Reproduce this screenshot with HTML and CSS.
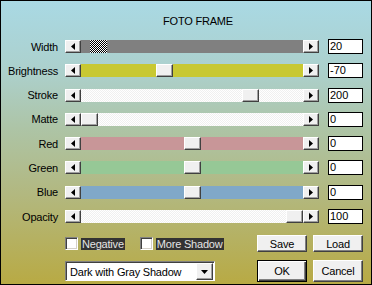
FILE: index.html
```html
<!DOCTYPE html>
<html lang="en">
<head>
<meta charset="UTF-8" />
<title>Foto Frame</title>
<link rel="stylesheet" href="styles.css">
</head>
<body>
  <div class="dialog">
    <div class="title">FOTO FRAME</div>

    <div class="rows">
      <div class="row">
        <span class="label">Width</span>
        <div class="scroll">
          <span class="arrow"><svg width="4" height="7"><polygon points="4,0 0,3.5 4,7" /></svg></span>
          <div class="track track-gray"><span class="thumb thumb-focus" style="left:9px"></span></div>
          <span class="arrow"><svg width="4" height="7"><polygon points="0,0 4,3.5 0,7" /></svg></span>
        </div>
        <span class="value">20</span>
      </div>

      <div class="row">
        <span class="label">Brightness</span>
        <div class="scroll">
          <span class="arrow"><svg width="4" height="7"><polygon points="4,0 0,3.5 4,7" /></svg></span>
          <div class="track track-yellow"><span class="thumb" style="left:75px"></span></div>
          <span class="arrow"><svg width="4" height="7"><polygon points="0,0 4,3.5 0,7" /></svg></span>
        </div>
        <span class="value">-70</span>
      </div>

      <div class="row">
        <span class="label">Stroke</span>
        <div class="scroll">
          <span class="arrow"><svg width="4" height="7"><polygon points="4,0 0,3.5 4,7" /></svg></span>
          <div class="track track-dither"><span class="thumb" style="left:161px"></span></div>
          <span class="arrow"><svg width="4" height="7"><polygon points="0,0 4,3.5 0,7" /></svg></span>
        </div>
        <span class="value">200</span>
      </div>

      <div class="row">
        <span class="label">Matte</span>
        <div class="scroll">
          <span class="arrow"><svg width="4" height="7"><polygon points="4,0 0,3.5 4,7" /></svg></span>
          <div class="track track-dither"><span class="thumb" style="left:0px"></span></div>
          <span class="arrow"><svg width="4" height="7"><polygon points="0,0 4,3.5 0,7" /></svg></span>
        </div>
        <span class="value">0</span>
      </div>

      <div class="row">
        <span class="label">Red</span>
        <div class="scroll">
          <span class="arrow"><svg width="4" height="7"><polygon points="4,0 0,3.5 4,7" /></svg></span>
          <div class="track track-red"><span class="thumb" style="left:103px"></span></div>
          <span class="arrow"><svg width="4" height="7"><polygon points="0,0 4,3.5 0,7" /></svg></span>
        </div>
        <span class="value">0</span>
      </div>

      <div class="row">
        <span class="label">Green</span>
        <div class="scroll">
          <span class="arrow"><svg width="4" height="7"><polygon points="4,0 0,3.5 4,7" /></svg></span>
          <div class="track track-green"><span class="thumb" style="left:103px"></span></div>
          <span class="arrow"><svg width="4" height="7"><polygon points="0,0 4,3.5 0,7" /></svg></span>
        </div>
        <span class="value">0</span>
      </div>

      <div class="row">
        <span class="label">Blue</span>
        <div class="scroll">
          <span class="arrow"><svg width="4" height="7"><polygon points="4,0 0,3.5 4,7" /></svg></span>
          <div class="track track-blue"><span class="thumb" style="left:103px"></span></div>
          <span class="arrow"><svg width="4" height="7"><polygon points="0,0 4,3.5 0,7" /></svg></span>
        </div>
        <span class="value">0</span>
      </div>

      <div class="row">
        <span class="label">Opacity</span>
        <div class="scroll">
          <span class="arrow"><svg width="4" height="7"><polygon points="4,0 0,3.5 4,7" /></svg></span>
          <div class="track track-dither"><span class="thumb" style="left:205px"></span></div>
          <span class="arrow"><svg width="4" height="7"><polygon points="0,0 4,3.5 0,7" /></svg></span>
        </div>
        <span class="value">100</span>
      </div>
    </div>

    <div class="bottom">
      <div class="checks">
        <span class="box"></span>
        <span class="check-text">Negative</span>
        <span class="box box-second"></span>
        <span class="check-text">More Shadow</span>
      </div>
      <button class="btn">Save</button>
      <button class="btn">Load</button>

      <div class="select">
        <span class="select-text">Dark with Gray Shadow</span>
        <span class="select-btn"><svg width="7" height="4"><polygon points="0,0 7,0 3.5,4" /></svg></span>
      </div>
      <button class="btn btn-big btn-default">OK</button>
      <button class="btn btn-big">Cancel</button>
    </div>
  </div>
</body>
</html>
```

FILE: styles.css
```css
body {
  margin: 0;
  font-family: "Liberation Sans", Arial, sans-serif;
  font-size: 11px;
  color: #000;
}

.dialog {
  width: 372px;
  height: 285px;
  box-sizing: border-box;
  border: 1px solid #000;
  padding-top: 14px;
  background: linear-gradient(180deg, #a9d9e4 0%, #acd0cc 25%, #adc4a6 45%, #b2b880 68%, #b8aa44 100%);
}

.title {
  padding-left: 162px;
  line-height: 13px;
  letter-spacing: -0.2px;
}

/* Slider rows */
.rows {
  display: flex;
  flex-direction: column;
  gap: 9.3px;
  margin-top: 11px;
}

.row {
  display: flex;
  align-items: center;
  height: 15px;
}

.label {
  width: 57px;
  text-align: right;
  letter-spacing: -0.2px;
}

.scroll {
  display: flex;
  width: 254px;
  height: 13px;
  margin-left: 7px;
}

.arrow,
.thumb,
.select-btn {
  box-sizing: border-box;
  background: #f0f0f0;
  border: 1px solid;
  border-color: #fff #404040 #404040 #fff;
  box-shadow: inset -1px -1px #a0a0a0;
}

.arrow {
  width: 16px;
  display: flex;
  align-items: center;
  justify-content: center;
}

.track {
  flex: 1;
  position: relative;
}

.thumb {
  position: absolute;
  top: 0;
  width: 17px;
  height: 13px;
}

.thumb-focus {
  border: none;
  box-shadow: none;
  background: repeating-conic-gradient(#000 0 25%, #fff 0 50%) 0 0 / 2px 2px;
}

.track-gray { background: #808080; }
.track-yellow { background: #c8c832; }
.track-red { background: #c89698; }
.track-green { background: #96c896; }
.track-blue { background: #80a8c8; }
.track-dither {
  background: repeating-conic-gradient(#fff 0 25%, #f0f0f0 0 50%) 0 0 / 2px 2px;
}

.value {
  width: 35px;
  height: 15px;
  margin-left: 9px;
  box-sizing: border-box;
  border: 1px solid #000;
  background: #fff;
  padding-left: 1px;
  line-height: 13px;
}

/* Bottom controls */
.bottom {
  display: grid;
  grid-template-columns: 186px 50px 50px;
  grid-template-rows: 17px 22px;
  column-gap: 6px;
  row-gap: 8px;
  margin-top: 11px;
  padding-left: 64px;
}

.checks {
  display: flex;
  align-items: center;
}

.box {
  width: 13px;
  height: 13px;
  box-sizing: border-box;
  background: #fff;
  border: 1px solid;
  border-color: #808080 #fff #fff #808080;
  box-shadow: inset 1px 1px #404040, inset -1px -1px #d4d0c8;
  margin-right: 3px;
}

.box-second {
  margin-left: 15px;
}

.check-text {
  background: #333;
  color: #e4e4e4;
  height: 12px;
  line-height: 12px;
  padding: 0 1px;
  letter-spacing: -0.2px;
}

.btn {
  font: inherit;
  letter-spacing: -0.2px;
  color: #000;
  padding: 0;
  background: #f0f0f0;
  border: 1px solid;
  border-color: #fff #404040 #404040 #fff;
  box-shadow: inset -1px -1px #808080;
}

.btn-default {
  border-color: #000;
  box-shadow: inset 1px 1px #fff, inset -1px -1px #404040, inset -2px -2px #808080;
}

.select {
  width: 150px;
  height: 20px;
  align-self: center;
  box-sizing: border-box;
  display: flex;
  align-items: center;
  justify-content: space-between;
  background: #fff;
  border: 1px solid;
  border-color: #808080 #fff #fff #808080;
  box-shadow: inset 1px 1px #404040;
  padding: 1px 1px 0 4px;
}

.select-text {
  letter-spacing: -0.2px;
}

.select-btn {
  width: 17px;
  height: 17px;
  display: flex;
  align-items: center;
  justify-content: center;
}
```
